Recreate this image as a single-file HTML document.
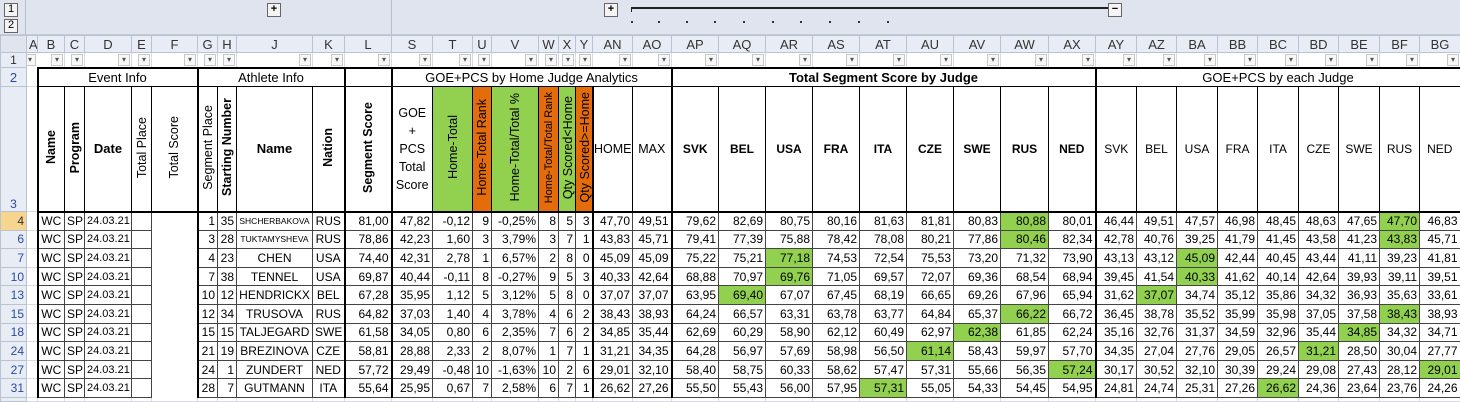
<!DOCTYPE html>
<html><head><meta charset="utf-8"><style>
body{margin:0;width:1460px;height:402px;overflow:hidden;background:#fff;font-family:"Liberation Sans",sans-serif;position:relative}
.top{position:absolute;left:0;top:0;width:1460px;height:35px;background:#dfe4ee;border-bottom:1px solid #c4cad6;box-sizing:border-box}
.btn{position:absolute;width:12px;height:12px;border:1px solid #666;background:#f4f4f4;font-size:11px;line-height:11px;text-align:center;color:#000;font-weight:bold}
.dot{position:absolute;width:2px;height:2px;background:#333;top:21px}
table{border-collapse:collapse;table-layout:fixed;width:1460px;position:absolute;top:35px;left:0}
td{border:1px solid #d6dbe5;padding:0 2px;overflow:hidden;white-space:nowrap;font-size:12px;color:#000;box-sizing:border-box}
td.h{background:#e8ecf4;color:#333;text-align:center;font-size:13px;border-color:#bcc3d0}
td.rh{background:#e8ecf4;color:#2a4aa5;text-align:center;font-size:12px;border-color:#bcc3d0;padding:0}
td.rh.sel{background:#f6d68e;color:#333}
tr.f td{height:13px;padding:0;position:relative}
tr.f td:not(.rh):after{content:"▾";position:absolute;right:1px;top:1px;width:10px;height:10px;border:1px solid #c8c8c8;background:#f8f8f8;font-size:8px;line-height:10px;text-align:center;color:#555}
tr.g td{height:19px;font-size:13px;text-align:center}
tr.g td.b{border:1px solid #000;border-top:2px solid #000}
tr.t td{height:125px;text-align:center;vertical-align:middle;font-size:12px}
tr.t td.b{border:1px solid #000;border-bottom:2px solid #000}
.v{writing-mode:vertical-rl;transform:rotate(180deg);display:inline-block;white-space:nowrap;font-size:12.5px}
.bo{font-weight:bold}
tr.d td{height:18.6px;text-align:right;padding:0 2px;font-size:12px}
tr.d td.b{border:1px solid #444}
tr.d td.c{text-align:center}
tr.d td.nb{border-top-color:#fff;border-bottom-color:#fff}
.gr{background:#92d050!important}
.or{background:#e46c0a!important}
.L{border-left:2px solid #000!important}
.R{border-right:2px solid #000!important}
tr.e td{height:4px}
</style></head><body>
<div class="top">
 <div style="position:absolute;left:0;top:0;width:26px;height:35px;border-right:1px solid #b8bfcc;box-sizing:border-box"></div>
 <div class="btn" style="left:4px;top:3px;font-weight:normal">1</div>
 <div class="btn" style="left:4px;top:19px;font-weight:normal">2</div>
 <div class="btn" style="left:267px;top:3px">+</div>
 <div style="position:absolute;left:391px;top:0;width:1px;height:35px;background:#b8bfcc"></div>
 <div class="btn" style="left:604px;top:3px">+</div>
 <div style="position:absolute;left:631px;top:7px;width:478px;height:2px;background:#222"></div>
 <div style="position:absolute;left:631px;top:7px;width:1px;height:5px;background:#222"></div>
 <div class="btn" style="left:1108px;top:3px">−</div>
 <div class="dot" style="left:631px"></div><div class="dot" style="left:658px"></div><div class="dot" style="left:686px"></div><div class="dot" style="left:714px"></div><div class="dot" style="left:743px"></div><div class="dot" style="left:772px"></div><div class="dot" style="left:800px"></div><div class="dot" style="left:829px"></div><div class="dot" style="left:858px"></div><div class="dot" style="left:887px"></div>
</div>
<table>
<colgroup><col style="width:26px"><col style="width:11px"><col style="width:27px"><col style="width:20px"><col style="width:47px"><col style="width:20px"><col style="width:46px"><col style="width:20px"><col style="width:19px"><col style="width:76px"><col style="width:32px"><col style="width:47px"><col style="width:41px"><col style="width:40px"><col style="width:19px"><col style="width:47px"><col style="width:20px"><col style="width:17px"><col style="width:17px"><col style="width:40px"><col style="width:39px"><col style="width:47px"><col style="width:47px"><col style="width:47px"><col style="width:47px"><col style="width:47px"><col style="width:47px"><col style="width:47px"><col style="width:48px"><col style="width:47px"><col style="width:41px"><col style="width:40px"><col style="width:41px"><col style="width:40px"><col style="width:41px"><col style="width:40px"><col style="width:41px"><col style="width:40px"><col style="width:41px"></colgroup>
<tr style="height:17px"><td class="h" style="background:#dfe4ee"></td><td class="h">A</td><td class="h">B</td><td class="h">C</td><td class="h">D</td><td class="h">E</td><td class="h">F</td><td class="h">G</td><td class="h">H</td><td class="h">J</td><td class="h">K</td><td class="h">L</td><td class="h">S</td><td class="h">T</td><td class="h">U</td><td class="h">V</td><td class="h">W</td><td class="h">X</td><td class="h">Y</td><td class="h">AN</td><td class="h">AO</td><td class="h">AP</td><td class="h">AQ</td><td class="h">AR</td><td class="h">AS</td><td class="h">AT</td><td class="h">AU</td><td class="h">AV</td><td class="h">AW</td><td class="h">AX</td><td class="h">AY</td><td class="h">AZ</td><td class="h">BA</td><td class="h">BB</td><td class="h">BC</td><td class="h">BD</td><td class="h">BE</td><td class="h">BF</td><td class="h">BG</td></tr>
<tr class="f"><td class="rh" style="color:#333">1</td><td style="border-color:#fff"></td><td></td><td></td><td></td><td></td><td></td><td></td><td></td><td></td><td></td><td></td><td></td><td></td><td></td><td></td><td></td><td></td><td></td><td></td><td></td><td></td><td></td><td></td><td></td><td></td><td></td><td></td><td></td><td></td><td></td><td></td><td></td><td></td><td></td><td></td><td></td><td></td><td></td></tr>
<tr class="g"><td class="rh">2</td><td></td><td class="b L R" colspan="5">Event Info</td><td class="b L R" colspan="4">Athlete Info</td><td class="b L"></td><td class="b L R" colspan="9">GOE+PCS by Home Judge Analytics</td><td class="b L R bo" colspan="9">Total Segment Score by Judge</td><td class="b L R" colspan="9">GOE+PCS by each Judge</td></tr>
<tr class="t"><td class="rh" style="vertical-align:bottom">3</td><td></td>
<td class="b L"><span class="v bo">Name</span></td><td class="b"><span class="v bo">Program</span></td><td class="b bo" style="font-size:13px">Date</td><td class="b"><span class="v">Total Place</span></td><td class="b R"><span class="v">Total Score</span></td>
<td class="b L"><span class="v">Segment Place</span></td><td class="b"><span class="v bo">Starting Number</span></td><td class="b bo" style="font-size:13px">Name</td><td class="b R"><span class="v bo">Nation</span></td>
<td class="b L"><span class="v bo">Segment Score</span></td>
<td class="b L" style="white-space:normal;line-height:18px;font-size:12.5px">GOE<br>+<br>PCS<br>Total<br>Score</td>
<td class="b gr"><span class="v">Home-Total</span></td><td class="b or"><span class="v">Home-Total Rank</span></td><td class="b gr"><span class="v">Home-Total/Total %</span></td><td class="b or"><span class="v" style="font-size:11px">Home-Total/Total Rank</span></td><td class="b gr"><span class="v">Qty Scored&lt;Home</span></td><td class="b or"><span class="v">Qty Scored&gt;=Home</span></td>
<td class="b L" style="font-size:12.5px;padding:0">HOME</td><td class="b R" style="font-size:12.5px">MAX</td>
<td class="b L bo">SVK</td><td class="b bo">BEL</td><td class="b bo">USA</td><td class="b bo">FRA</td><td class="b bo">ITA</td><td class="b bo">CZE</td><td class="b bo">SWE</td><td class="b bo">RUS</td><td class="b bo R">NED</td>
<td class="b L">SVK</td><td class="b">BEL</td><td class="b">USA</td><td class="b">FRA</td><td class="b">ITA</td><td class="b">CZE</td><td class="b">SWE</td><td class="b">RUS</td><td class="b R">NED</td></tr>
<tr class="d"><td class="rh sel">4</td><td></td><td class="b c L">WC</td><td class="b c">SP</td><td class="b c" style="font-size:11px">24.03.21</td><td class="b"></td><td class="b R nb"></td><td class="b L">1</td><td class="b">35</td><td class="b c" style="font-size:8.5px;padding:0">SHCHERBAKOVA</td><td class="b c R">RUS</td><td class="b">81,00</td><td class="b L">47,82</td><td class="b">-0,12</td><td class="b">9</td><td class="b">-0,25%</td><td class="b">8</td><td class="b">5</td><td class="b R">3</td><td class="b">47,70</td><td class="b R">49,51</td><td class="b">79,62</td><td class="b">82,69</td><td class="b">80,75</td><td class="b">80,16</td><td class="b">81,63</td><td class="b">81,81</td><td class="b">80,83</td><td class="b gr">80,88</td><td class="b R">80,01</td><td class="b">46,44</td><td class="b">49,51</td><td class="b">47,57</td><td class="b">46,98</td><td class="b">48,45</td><td class="b">48,63</td><td class="b">47,65</td><td class="b gr">47,70</td><td class="b R">46,83</td></tr>
<tr class="d"><td class="rh">6</td><td></td><td class="b c L">WC</td><td class="b c">SP</td><td class="b c" style="font-size:11px">24.03.21</td><td class="b"></td><td class="b R nb"></td><td class="b L">3</td><td class="b">28</td><td class="b c" style="font-size:8.5px;padding:0">TUKTAMYSHEVA</td><td class="b c R">RUS</td><td class="b">78,86</td><td class="b L">42,23</td><td class="b">1,60</td><td class="b">3</td><td class="b">3,79%</td><td class="b">3</td><td class="b">7</td><td class="b R">1</td><td class="b">43,83</td><td class="b R">45,71</td><td class="b">79,41</td><td class="b">77,39</td><td class="b">75,88</td><td class="b">78,42</td><td class="b">78,08</td><td class="b">80,21</td><td class="b">77,86</td><td class="b gr">80,46</td><td class="b R">82,34</td><td class="b">42,78</td><td class="b">40,76</td><td class="b">39,25</td><td class="b">41,79</td><td class="b">41,45</td><td class="b">43,58</td><td class="b">41,23</td><td class="b gr">43,83</td><td class="b R">45,71</td></tr>
<tr class="d"><td class="rh">7</td><td></td><td class="b c L">WC</td><td class="b c">SP</td><td class="b c" style="font-size:11px">24.03.21</td><td class="b"></td><td class="b R nb"></td><td class="b L">4</td><td class="b">23</td><td class="b c">CHEN</td><td class="b c R">USA</td><td class="b">74,40</td><td class="b L">42,31</td><td class="b">2,78</td><td class="b">1</td><td class="b">6,57%</td><td class="b">2</td><td class="b">8</td><td class="b R">0</td><td class="b">45,09</td><td class="b R">45,09</td><td class="b">75,22</td><td class="b">75,21</td><td class="b gr">77,18</td><td class="b">74,53</td><td class="b">72,54</td><td class="b">75,53</td><td class="b">73,20</td><td class="b">71,32</td><td class="b R">73,90</td><td class="b">43,13</td><td class="b">43,12</td><td class="b gr">45,09</td><td class="b">42,44</td><td class="b">40,45</td><td class="b">43,44</td><td class="b">41,11</td><td class="b">39,23</td><td class="b R">41,81</td></tr>
<tr class="d"><td class="rh">10</td><td></td><td class="b c L">WC</td><td class="b c">SP</td><td class="b c" style="font-size:11px">24.03.21</td><td class="b"></td><td class="b R nb"></td><td class="b L">7</td><td class="b">38</td><td class="b c">TENNEL</td><td class="b c R">USA</td><td class="b">69,87</td><td class="b L">40,44</td><td class="b">-0,11</td><td class="b">8</td><td class="b">-0,27%</td><td class="b">9</td><td class="b">5</td><td class="b R">3</td><td class="b">40,33</td><td class="b R">42,64</td><td class="b">68,88</td><td class="b">70,97</td><td class="b gr">69,76</td><td class="b">71,05</td><td class="b">69,57</td><td class="b">72,07</td><td class="b">69,36</td><td class="b">68,54</td><td class="b R">68,94</td><td class="b">39,45</td><td class="b">41,54</td><td class="b gr">40,33</td><td class="b">41,62</td><td class="b">40,14</td><td class="b">42,64</td><td class="b">39,93</td><td class="b">39,11</td><td class="b R">39,51</td></tr>
<tr class="d"><td class="rh">13</td><td></td><td class="b c L">WC</td><td class="b c">SP</td><td class="b c" style="font-size:11px">24.03.21</td><td class="b"></td><td class="b R nb"></td><td class="b L">10</td><td class="b">12</td><td class="b c">HENDRICKX</td><td class="b c R">BEL</td><td class="b">67,28</td><td class="b L">35,95</td><td class="b">1,12</td><td class="b">5</td><td class="b">3,12%</td><td class="b">5</td><td class="b">8</td><td class="b R">0</td><td class="b">37,07</td><td class="b R">37,07</td><td class="b">63,95</td><td class="b gr">69,40</td><td class="b">67,07</td><td class="b">67,45</td><td class="b">68,19</td><td class="b">66,65</td><td class="b">69,26</td><td class="b">67,96</td><td class="b R">65,94</td><td class="b">31,62</td><td class="b gr">37,07</td><td class="b">34,74</td><td class="b">35,12</td><td class="b">35,86</td><td class="b">34,32</td><td class="b">36,93</td><td class="b">35,63</td><td class="b R">33,61</td></tr>
<tr class="d"><td class="rh">15</td><td></td><td class="b c L">WC</td><td class="b c">SP</td><td class="b c" style="font-size:11px">24.03.21</td><td class="b"></td><td class="b R nb"></td><td class="b L">12</td><td class="b">34</td><td class="b c">TRUSOVA</td><td class="b c R">RUS</td><td class="b">64,82</td><td class="b L">37,03</td><td class="b">1,40</td><td class="b">4</td><td class="b">3,78%</td><td class="b">4</td><td class="b">6</td><td class="b R">2</td><td class="b">38,43</td><td class="b R">38,93</td><td class="b">64,24</td><td class="b">66,57</td><td class="b">63,31</td><td class="b">63,78</td><td class="b">63,77</td><td class="b">64,84</td><td class="b">65,37</td><td class="b gr">66,22</td><td class="b R">66,72</td><td class="b">36,45</td><td class="b">38,78</td><td class="b">35,52</td><td class="b">35,99</td><td class="b">35,98</td><td class="b">37,05</td><td class="b">37,58</td><td class="b gr">38,43</td><td class="b R">38,93</td></tr>
<tr class="d"><td class="rh">18</td><td></td><td class="b c L">WC</td><td class="b c">SP</td><td class="b c" style="font-size:11px">24.03.21</td><td class="b"></td><td class="b R nb"></td><td class="b L">15</td><td class="b">15</td><td class="b c">TALJEGARD</td><td class="b c R">SWE</td><td class="b">61,58</td><td class="b L">34,05</td><td class="b">0,80</td><td class="b">6</td><td class="b">2,35%</td><td class="b">7</td><td class="b">6</td><td class="b R">2</td><td class="b">34,85</td><td class="b R">35,44</td><td class="b">62,69</td><td class="b">60,29</td><td class="b">58,90</td><td class="b">62,12</td><td class="b">60,49</td><td class="b">62,97</td><td class="b gr">62,38</td><td class="b">61,85</td><td class="b R">62,24</td><td class="b">35,16</td><td class="b">32,76</td><td class="b">31,37</td><td class="b">34,59</td><td class="b">32,96</td><td class="b">35,44</td><td class="b gr">34,85</td><td class="b">34,32</td><td class="b R">34,71</td></tr>
<tr class="d"><td class="rh">24</td><td></td><td class="b c L">WC</td><td class="b c">SP</td><td class="b c" style="font-size:11px">24.03.21</td><td class="b"></td><td class="b R nb"></td><td class="b L">21</td><td class="b">19</td><td class="b c">BREZINOVA</td><td class="b c R">CZE</td><td class="b">58,81</td><td class="b L">28,88</td><td class="b">2,33</td><td class="b">2</td><td class="b">8,07%</td><td class="b">1</td><td class="b">7</td><td class="b R">1</td><td class="b">31,21</td><td class="b R">34,35</td><td class="b">64,28</td><td class="b">56,97</td><td class="b">57,69</td><td class="b">58,98</td><td class="b">56,50</td><td class="b gr">61,14</td><td class="b">58,43</td><td class="b">59,97</td><td class="b R">57,70</td><td class="b">34,35</td><td class="b">27,04</td><td class="b">27,76</td><td class="b">29,05</td><td class="b">26,57</td><td class="b gr">31,21</td><td class="b">28,50</td><td class="b">30,04</td><td class="b R">27,77</td></tr>
<tr class="d"><td class="rh">27</td><td></td><td class="b c L">WC</td><td class="b c">SP</td><td class="b c" style="font-size:11px">24.03.21</td><td class="b"></td><td class="b R nb"></td><td class="b L">24</td><td class="b">1</td><td class="b c">ZUNDERT</td><td class="b c R">NED</td><td class="b">57,72</td><td class="b L">29,49</td><td class="b">-0,48</td><td class="b">10</td><td class="b">-1,63%</td><td class="b">10</td><td class="b">2</td><td class="b R">6</td><td class="b">29,01</td><td class="b R">32,10</td><td class="b">58,40</td><td class="b">58,75</td><td class="b">60,33</td><td class="b">58,62</td><td class="b">57,47</td><td class="b">57,31</td><td class="b">55,66</td><td class="b">56,35</td><td class="b gr R">57,24</td><td class="b">30,17</td><td class="b">30,52</td><td class="b">32,10</td><td class="b">30,39</td><td class="b">29,24</td><td class="b">29,08</td><td class="b">27,43</td><td class="b">28,12</td><td class="b gr R">29,01</td></tr>
<tr class="d"><td class="rh">31</td><td></td><td class="b c L">WC</td><td class="b c">SP</td><td class="b c" style="font-size:11px">24.03.21</td><td class="b"></td><td class="b R nb"></td><td class="b L">28</td><td class="b">7</td><td class="b c">GUTMANN</td><td class="b c R">ITA</td><td class="b">55,64</td><td class="b L">25,95</td><td class="b">0,67</td><td class="b">7</td><td class="b">2,58%</td><td class="b">6</td><td class="b">7</td><td class="b R">1</td><td class="b">26,62</td><td class="b R">27,26</td><td class="b">55,50</td><td class="b">55,43</td><td class="b">56,00</td><td class="b">57,95</td><td class="b gr">57,31</td><td class="b">55,05</td><td class="b">54,33</td><td class="b">54,45</td><td class="b R">54,95</td><td class="b">24,81</td><td class="b">24,74</td><td class="b">25,31</td><td class="b">27,26</td><td class="b gr">26,62</td><td class="b">24,36</td><td class="b">23,64</td><td class="b">23,76</td><td class="b R">24,26</td></tr>
<tr class="e"><td class="rh"></td><td></td><td></td><td></td><td></td><td></td><td></td><td></td><td></td><td></td><td></td><td></td><td></td><td></td><td></td><td></td><td></td><td></td><td></td><td></td><td></td><td></td><td></td><td></td><td></td><td></td><td></td><td></td><td></td><td></td><td></td><td></td><td></td><td></td><td></td><td></td><td></td><td></td><td></td></tr>
</table>
</body></html>
